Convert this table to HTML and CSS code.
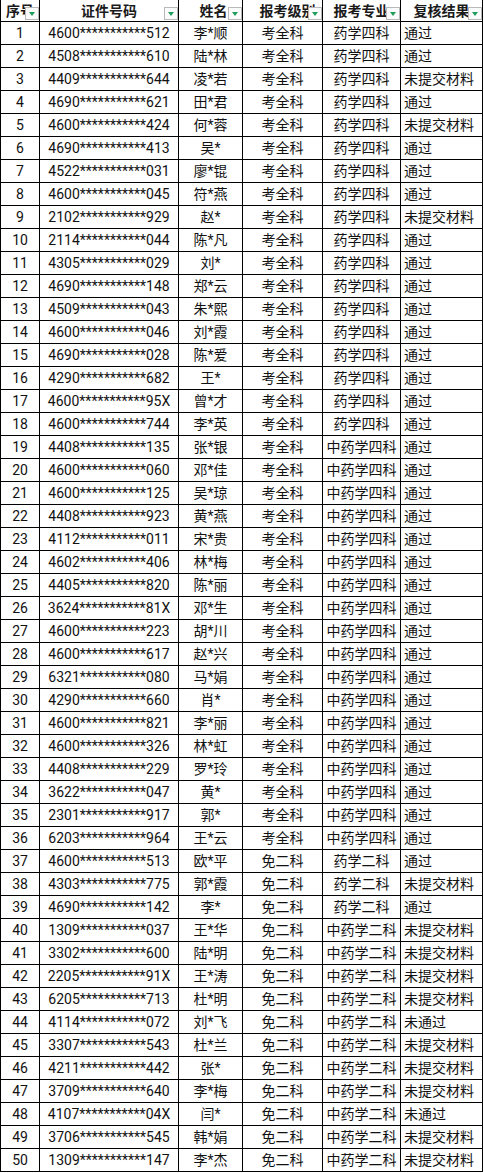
FILE: index.html
```html
<!DOCTYPE html>
<html lang="zh-CN">
<head>
<meta charset="utf-8">
<title>复核结果</title>
<link rel="stylesheet" href="styles.css">
</head>
<body>
<div class="sheet" id="sheet">
  <div class="hd c-no"><span class="ht">序号</span><span class="flt"></span></div>
  <div class="hd c-id"><span class="ht">证件号码</span><span class="flt"></span></div>
  <div class="hd c-nm"><span class="ht">姓名</span><span class="flt"></span></div>
  <div class="hd c-lv"><span class="ht">报考级别</span><span class="flt"></span></div>
  <div class="hd c-mj"><span class="ht">报考专业</span><span class="flt"></span></div>
  <div class="hd c-rs"><span class="ht">复核结果</span><span class="flt"></span></div>
</div>
<script src="app.js"></script>
</body>
</html>
```

FILE: app.js
```js
const rows = [
["4600","512","李*顺","考全科","药学四科","通过"],
["4508","610","陆*林","考全科","药学四科","通过"],
["4409","644","凌*若","考全科","药学四科","未提交材料"],
["4690","621","田*君","考全科","药学四科","通过"],
["4600","424","何*蓉","考全科","药学四科","未提交材料"],
["4690","413","吴*","考全科","药学四科","通过"],
["4522","031","廖*锟","考全科","药学四科","通过"],
["4600","045","符*燕","考全科","药学四科","通过"],
["2102","929","赵*","考全科","药学四科","未提交材料"],
["2114","044","陈*凡","考全科","药学四科","通过"],
["4305","029","刘*","考全科","药学四科","通过"],
["4690","148","郑*云","考全科","药学四科","通过"],
["4509","043","朱*熙","考全科","药学四科","通过"],
["4600","046","刘*霞","考全科","药学四科","通过"],
["4690","028","陈*爱","考全科","药学四科","通过"],
["4290","682","王*","考全科","药学四科","通过"],
["4600","95X","曾*才","考全科","药学四科","通过"],
["4600","744","李*英","考全科","药学四科","通过"],
["4408","135","张*银","考全科","中药学四科","通过"],
["4600","060","邓*佳","考全科","中药学四科","通过"],
["4600","125","吴*琼","考全科","中药学四科","通过"],
["4408","923","黄*燕","考全科","中药学四科","通过"],
["4112","011","宋*贵","考全科","中药学四科","通过"],
["4602","406","林*梅","考全科","中药学四科","通过"],
["4405","820","陈*丽","考全科","中药学四科","通过"],
["3624","81X","邓*生","考全科","中药学四科","通过"],
["4600","223","胡*川","考全科","中药学四科","通过"],
["4600","617","赵*兴","考全科","中药学四科","通过"],
["6321","080","马*娟","考全科","中药学四科","通过"],
["4290","660","肖*","考全科","中药学四科","通过"],
["4600","821","李*丽","考全科","中药学四科","通过"],
["4600","326","林*虹","考全科","中药学四科","通过"],
["4408","229","罗*玲","考全科","中药学四科","通过"],
["3622","047","黄*","考全科","中药学四科","通过"],
["2301","917","郭*","考全科","中药学四科","通过"],
["6203","964","王*云","考全科","中药学四科","通过"],
["4600","513","欧*平","免二科","药学二科","通过"],
["4303","775","郭*霞","免二科","药学二科","未提交材料"],
["4690","142","李*","免二科","药学二科","通过"],
["1309","037","王*华","免二科","中药学二科","未提交材料"],
["3302","600","陆*明","免二科","中药学二科","未提交材料"],
["2205","91X","王*涛","免二科","中药学二科","未提交材料"],
["6205","713","杜*明","免二科","中药学二科","未提交材料"],
["4114","072","刘*飞","免二科","中药学二科","未通过"],
["3307","543","杜*兰","免二科","中药学二科","未提交材料"],
["4211","442","张*","免二科","中药学二科","未提交材料"],
["3709","640","李*梅","免二科","中药学二科","未提交材料"],
["4107","04X","闫*","免二科","中药学二科","未通过"],
["3706","545","韩*娟","免二科","中药学二科","未提交材料"],
["1309","147","李*杰","免二科","中药学二科","未提交材料"]
];
const sheet = document.getElementById("sheet");
const cls = ["c-no","c-id","c-nm","c-lv","c-mj","c-rs"];
rows.forEach((r, i) => {
  const vals = [String(i + 1), r[0] + "***********" + r[1], r[2], r[3], r[4], r[5]];
  vals.forEach((v, j) => {
    const d = document.createElement("div");
    d.className = "td " + cls[j];
    d.textContent = v;
    sheet.appendChild(d);
  });
});
```

FILE: styles.css
```css
html, body {
  margin: 0;
  padding: 0;
  background: #fff;
}
.sheet {
  display: grid;
  grid-template-columns: 38px 138px 63px 79px 77px 81px;
  grid-auto-rows: 22px;
  grid-template-rows: 21px;
  gap: 1px;
  background: #000;
  border: 1px solid #000;
  border-top: 0;
  width: max-content;
  font-family: Roboto, "Noto Sans CJK SC", sans-serif;
  font-size: 14px;
  color: #111;
}
.hd, .td {
  background: #fff;
  display: flex;
  align-items: center;
  justify-content: center;
  white-space: nowrap;
  overflow: hidden;
  line-height: 1;
}
.hd {
  position: relative;
  font-weight: bold;
  color: #1a1a1a;
}
.td.c-rs {
  justify-content: flex-start;
  padding-left: 3px;
}
.hd.c-nm .ht {
  padding-left: 6px;
}
.hd.c-lv .ht {
  padding-left: 10px;
}
.flt {
  position: absolute;
  right: 0;
  bottom: 1px;
  width: 12px;
  height: 11px;
  border: 1px solid #b9b9b9;
  background: #fbfbfb;
  display: flex;
  align-items: center;
  justify-content: center;
}
.flt::after {
  content: "";
  width: 0;
  height: 0;
  border-left: 3.5px solid transparent;
  border-right: 3.5px solid transparent;
  border-top: 4px solid #1e9c5a;
  margin-top: 1px;
}
```
